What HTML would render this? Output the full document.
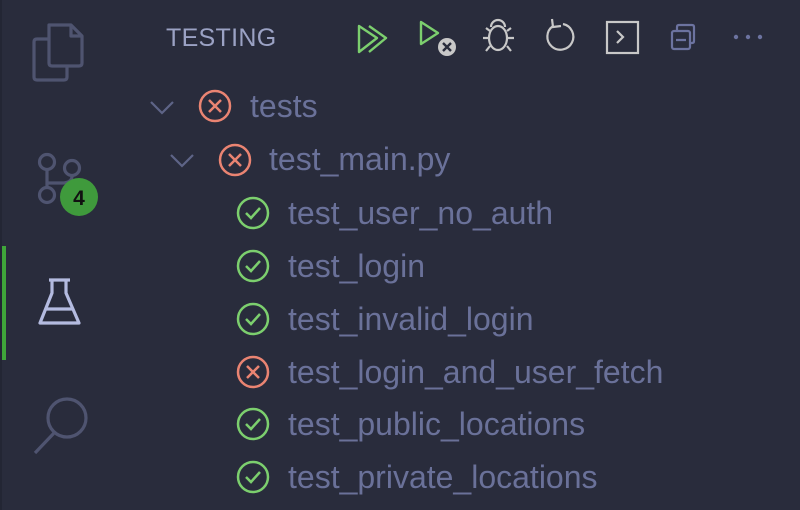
<!DOCTYPE html>
<html><head><style>
html,body{margin:0;padding:0;}
body{width:800px;height:510px;background:#292c3c;position:relative;overflow:hidden;font-family:"Liberation Sans",sans-serif;}
.strip{position:absolute;left:0;top:0;width:2px;height:510px;background:#232634;}
.act{position:absolute;left:2px;top:246px;width:4px;height:114px;background:#3fa63a;}
.t{position:absolute;color:#6a7199;font-size:32px;line-height:36px;white-space:nowrap;}
.title{position:absolute;left:166px;top:24px;color:#9ba2c4;font-size:25px;letter-spacing:0.3px;}
svg{position:absolute;overflow:visible;}
</style></head><body>
<div class="strip"></div>
<div class="act"></div>
<svg style="left:0;top:0" width="130" height="510">
<g fill="none" stroke="#4f5470" stroke-width="3.2" stroke-linejoin="round">
<path d="M49 25 H71 L82 36 V63 Q82 66 79 66 H52 Q49 66 49 63 Z"/>
<path d="M49 39 H37 Q34 39 34 42 V77 Q34 80 37 80 H64 Q67 80 67 77 V66"/>
<path d="M71 25 V36 H82"/>
<circle cx="47" cy="162" r="7.5"/><circle cx="72" cy="168" r="7.5"/><circle cx="47" cy="195" r="7.5"/>
<path d="M47 170 V187 M72 176 Q72 183 62 183 H47"/>
<circle cx="67" cy="418" r="19"/><path d="M55 432 L35 453"/>
</g>
<g fill="none" stroke="#b4bbe0" stroke-width="3.2" stroke-linejoin="round">
<path d="M49 280 H70 M52 280 V293 L40 323 H79 L66 293 V280 M46 309 H73"/>
</g>
<circle cx="79" cy="197" r="19" fill="#3f9a3c"/>
<text x="79" y="205" text-anchor="middle" font-family="Liberation Sans" font-weight="bold" font-size="21" fill="#111">4</text>
</svg>
<div class="title">TESTING</div>
<svg style="left:0;top:0" width="800" height="80">
<g fill="none" stroke="#7ccf6e" stroke-width="2.4" stroke-linejoin="round">
<path d="M359 26 L377 38 L359 52 Z"/><path d="M369 26 L386 38 L369 52"/>
<path d="M421 22 L438 33 L421 44 Z"/>
</g>
<circle cx="447" cy="47" r="9" fill="#c8c8c8"/>
<path d="M443 43 L451 51 M451 43 L443 51" stroke="#292c3c" stroke-width="2.4"/>
<g fill="none" stroke="#c8c8c8" stroke-width="2.2">
<path d="M491 27 A7 7 0 0 1 505 27"/>
<ellipse cx="498" cy="38" rx="9" ry="12"/>
<path d="M483 38 H489 M507 38 H514 M486 28 L490 31 M511 28 L507 31 M486 51 L490 46 M511 51 L507 46"/>
<path d="M553 26 A13 13 0 1 0 563 24"/><path d="M552 19 L553 27 L561 26"/>
<rect x="607" y="22" width="31" height="31"/><path d="M617 31 L623 37 L617 43"/>
</g>
<g fill="none" stroke="#6c73a0" stroke-width="2.2">
<rect x="672" y="31" width="18" height="18" rx="2"/><path d="M677 31 V27 Q677 25 679 25 H692 Q694 25 694 27 V41 Q694 43 692 43 H690 M676 40 H686"/>
</g>
<g fill="#6c73a0"><circle cx="736" cy="37" r="2.2"/><circle cx="748" cy="37" r="2.2"/><circle cx="760" cy="37" r="2.2"/></g>
</svg>
<svg style="left:0;top:0" width="800" height="510">
<g fill="none" stroke="#5e6487" stroke-width="2.2"><path d="M151 102 L162 113 L173 102"/><path d="M171 155 L182 166 L193 155"/></g>
<g fill="none" stroke="#ea8472" stroke-width="2.5">
<circle cx="215" cy="106" r="15"/><path d="M209 100 L221 112 M221 100 L209 112"/>
<circle cx="235" cy="160" r="15"/><path d="M229 154 L241 166 M241 154 L229 166"/>
<circle cx="253" cy="372" r="15"/><path d="M247 366 L259 378 M259 366 L247 378"/>
</g>
<g fill="none" stroke="#7ccf6e" stroke-width="2.5">
<circle cx="253" cy="213" r="15"/><path d="M246 213 L251 218 L260 208"/>
<circle cx="253" cy="266" r="15"/><path d="M246 266 L251 271 L260 261"/>
<circle cx="253" cy="319" r="15"/><path d="M246 319 L251 324 L260 314"/>
<circle cx="253" cy="424" r="15"/><path d="M246 424 L251 429 L260 419"/>
<circle cx="253" cy="477" r="15"/><path d="M246 477 L251 482 L260 472"/>
</g>
</svg>
<div class="t" style="left:250px;top:88px">tests</div>
<div class="t" style="left:269px;top:141px">test_main.py</div>
<div class="t" style="left:288px;top:195px">test_user_no_auth</div>
<div class="t" style="left:288px;top:248px">test_login</div>
<div class="t" style="left:288px;top:301px">test_invalid_login</div>
<div class="t" style="left:288px;top:354px">test_login_and_user_fetch</div>
<div class="t" style="left:288px;top:406px">test_public_locations</div>
<div class="t" style="left:288px;top:459px">test_private_locations</div>
</body></html>
